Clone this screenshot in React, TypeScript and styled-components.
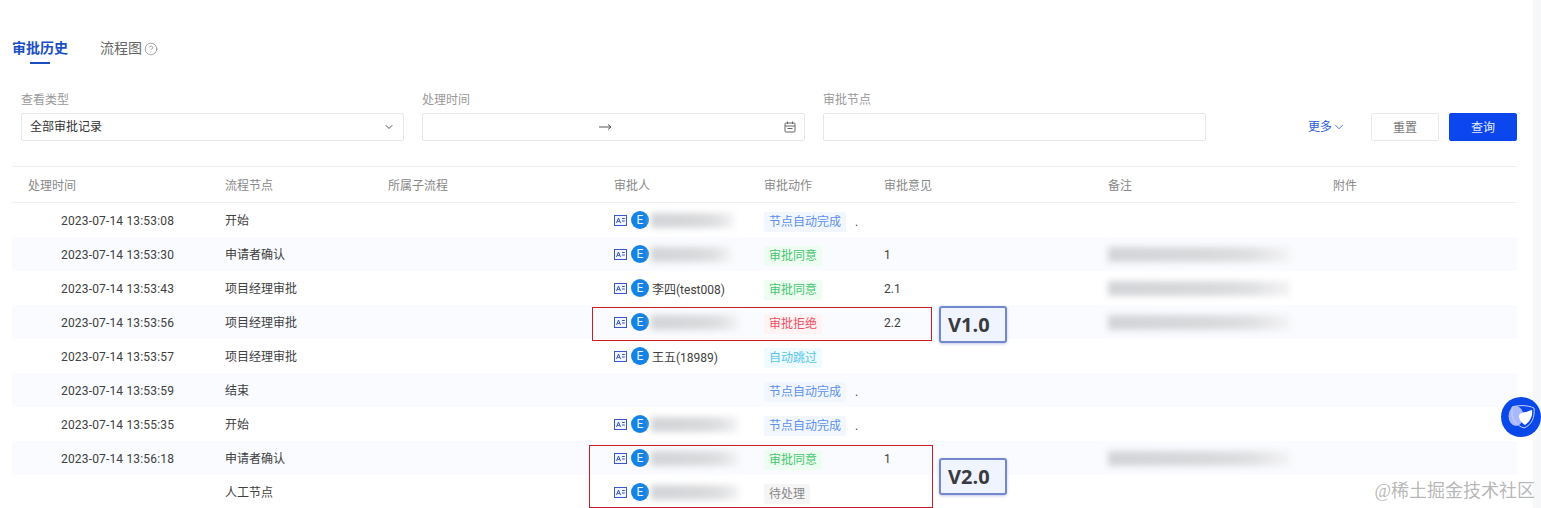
import React from "react";
import styled, { createGlobalStyle } from "styled-components";
import { ChevronDown, CircleHelp } from "lucide-react";

const Global = createGlobalStyle`
  html, body { margin: 0; padding: 0; height: 508px; overflow: hidden; background: #fff; }
  body { font-family: Roboto, "Noto Sans CJK SC", sans-serif; font-size: 12px; color: #333; }
`;

const Page = styled.div`
  position: relative;
  width: 1541px;
  height: 508px;
  overflow: hidden;
  display: flex;
`;
const Main = styled.main`
  width: 1533px;
  flex: none;
  padding: 38px 16px 0 12px;
  box-sizing: border-box;
`;
const ScrollTrack = styled.div`
  flex: 1;
  background: #f6f7f8;
`;
const Tabs = styled.div`
  display: flex;
  gap: 32px;
  height: 26px;
`;
const Tab = styled.div<{ $active?: boolean }>`
  position: relative;
  display: flex;
  align-items: center;
  gap: 2px;
  height: 20px;
  font-size: 14px;
  font-weight: ${(p) => (p.$active ? 600 : 400)};
  color: ${(p) => (p.$active ? "#1a4fc4" : "#666")};
  ${(p) =>
    p.$active &&
    `&::after { content: ""; position: absolute; left: 18px; bottom: -6px; width: 20px; height: 2px; background: #1a4fc4; }`}
`;
const TabLabel = styled.span`
  line-height: 20px;
  margin-top: -1px;
`;
const HelpIcon = styled(CircleHelp)`
  margin-top: 2px;
`;
const Filters = styled.div`
  display: flex;
  align-items: flex-end;
  margin-top: 27px;
  padding-left: 9px;
  height: 50px;
`;
const Field = styled.div`
  width: 383px;
  margin-right: 18px;
`;
const FieldLabel = styled.div`
  font-size: 12px;
  line-height: 18px;
  height: 22px;
  color: #999;
`;
const InputBox = styled.div`
  height: 28px;
  box-sizing: border-box;
  border: 1px solid #e4e6ea;
  border-radius: 2px;
  display: flex;
  align-items: center;
  justify-content: space-between;
  padding: 0 8px;
  font-size: 12px;
  color: #333;
`;
const InputText = styled.span`
  line-height: 18px;
  margin-top: -1px;
`;
const RangeArrow = styled.span`
  display: flex;
  margin-left: 168px;
`;
const Actions = styled.div`
  display: flex;
  align-items: center;
  margin-left: auto;
  height: 28px;
`;
const MoreLink = styled.div`
  display: flex;
  align-items: center;
  color: #2a5bdc;
  font-size: 12px;
  margin-right: 25px;
`;
const Button = styled.div<{ $primary?: boolean }>`
  width: 68px;
  height: 28px;
  box-sizing: border-box;
  display: flex;
  align-items: center;
  justify-content: center;
  padding-bottom: 2px;
  border-radius: 2px;
  font-size: 12px;
  margin-left: ${(p) => (p.$primary ? "10px" : "0")};
  background: ${(p) => (p.$primary ? "#0b46ee" : "#fff")};
  color: ${(p) => (p.$primary ? "#e8eefe" : "#777")};
  border: 1px solid ${(p) => (p.$primary ? "#0b46ee" : "#e6e8eb")};
`;
const Table = styled.div`
  margin-top: 25px;
`;
const COLS = "197px 163px 226px 150px 120px 224px 225px 200px";
const HeadRow = styled.div`
  display: grid;
  grid-template-columns: ${COLS};
  height: 37px;
  box-sizing: border-box;
  align-items: center;
  border-top: 1px solid #eeeff1;
  border-bottom: 1px solid #eeeff1;
  color: #888;
`;
const HeadCell = styled.div`
  padding: 0 0 1px 16px;
`;
const Row = styled.div<{ $alt: boolean }>`
  display: grid;
  grid-template-columns: ${COLS};
  height: 34px;
  align-items: center;
  background: ${(p) => (p.$alt ? "#f9fbfe" : "#fff")};
  color: #404040;
`;
const Cell = styled.div`
  padding-left: 16px;
  display: flex;
  align-items: center;
  min-width: 0;
`;
const TimeCell = styled(Cell)`
  padding: 2px 0 0 49px;
  letter-spacing: 0.17px;
`;
const NodeCell = styled(Cell)`
  padding-bottom: 2px;
`;
const OpinionCell = styled(Cell)`
  padding-top: 2px;
`;
const TagCell = styled(Cell)`
  padding-top: 4px;
`;
const Avatar = styled.span`
  width: 18px;
  height: 18px;
  border-radius: 50%;
  background: #1583e3;
  color: #eaf5ff;
  font-size: 12px;
  display: flex;
  align-items: center;
  justify-content: center;
  margin: 0 3px 0 4px;
  flex: none;
`;
const Blurred = styled.div<{ $w: number }>`
  width: ${(p) => p.$w}px;
  height: 15px;
  background: linear-gradient(90deg, #d2d4d7, #d8d9db 55%, #dfe0e2 78%, #f4f4f5);
  filter: blur(3px);
`;
const NameBlur = styled(Blurred)`
  margin-left: -1px;
`;
const Tag = styled.span<{ $c: string; $b: string }>`
  display: inline-block;
  height: 20px;
  line-height: 20px;
  padding: 0 5px;
  border-radius: 2px;
  font-size: 12px;
  color: ${(p) => p.$c};
  background: ${(p) => p.$b};
`;
const Dot = styled.span`
  margin-left: 9px;
  color: #444;
`;
const Highlight = styled.div<{ $x: number; $y: number; $w: number; $h: number }>`
  position: absolute;
  left: ${(p) => p.$x}px;
  top: ${(p) => p.$y}px;
  width: ${(p) => p.$w}px;
  height: ${(p) => p.$h}px;
  box-sizing: border-box;
  border: 1px solid #c81e28;
  pointer-events: none;
`;
const Version = styled.div<{ $y: number }>`
  position: absolute;
  left: 939px;
  top: ${(p) => p.$y}px;
  width: 68px;
  height: 37px;
  box-sizing: border-box;
  border: 2px solid #7388cf;
  border-radius: 3px;
  background: #eff4ff;
  box-shadow: 0 1px 3px rgba(80, 100, 180, 0.35);
  font-family: "Open Sans", "Liberation Sans", sans-serif;
  font-size: 20px;
  font-weight: 700;
  color: #3a3a40;
  display: flex;
  align-items: center;
  padding-left: 7px;
`;
const Float = styled.div`
  position: absolute;
  left: 1501px;
  top: 397px;
  width: 40px;
  height: 40px;
  border-radius: 50%;
  background: #0a48ea;
  display: flex;
  align-items: center;
  justify-content: center;
`;
const Watermark = styled.div`
  position: absolute;
  right: 6px;
  top: 479px;
  font-family: "Liberation Serif", "Noto Sans CJK SC", serif;
  font-size: 18px;
  line-height: 24px;
  color: rgba(120, 120, 120, 0.55);
  white-space: nowrap;
`;

const CardIcon = () => (
  <svg width="13" height="11" viewBox="0 0 13 11" fill="none" stroke="#3a58c8" strokeWidth="1" style={{ flex: "none" }}>
    <rect x="0.5" y="0.5" width="12" height="10" fill="#f3f6ff" />
    <path d="M2.5 8 L4.5 3 L6.5 8 M3.3 6.4 H5.7" />
    <path d="M8 3.5 H10.8 M8 6 H10.8" />
  </svg>
);
const ArrowIcon = () => (
  <svg width="13" height="8" viewBox="0 0 13 8" fill="none" stroke="#555" strokeWidth="1">
    <path d="M0 4 H12 M9 1.5 L12 4 L9 6.5" />
  </svg>
);
const CalendarIcon = () => (
  <svg width="12" height="12" viewBox="0 0 12 12" fill="none" stroke="#666" strokeWidth="1">
    <rect x="1" y="2" width="10" height="9" rx="1" />
    <path d="M1 5 H11 M3.5 .5 V3 M8.5 .5 V3 M3.5 7.5 H8.5" />
  </svg>
);
const FloatLogo = () => (
  <svg width="32" height="30" viewBox="0 0 32 30" style={{ marginLeft: 2 }}>
    <ellipse cx="10" cy="14" rx="7.5" ry="10" fill="#a9b8fb" />
    <path d="M6 5 C12 3 22 3 28 6 C29 15 26 23 18 26 C12 24 8 20 6 14 Z" fill="none" stroke="#c5d2ff" strokeWidth="1" />
    <path d="M13 14 C13 11 18 10 20 10 C22 9.5 25 8 26 8 C27 14 24 20 19 23 C16 21 13 18 13 14 Z" fill="#fff" />
  </svg>
);

const TAGS = {
  auto: { t: "节点自动完成", c: "#5b90ec", b: "#f2f7ff", dot: true },
  ok: { t: "审批同意", c: "#43c76e", b: "#effcf2" },
  no: { t: "审批拒绝", c: "#ee4f62", b: "#fff3f4" },
  skip: { t: "自动跳过", c: "#55c6ea", b: "#effbff" },
  wait: { t: "待处理", c: "#888", b: "#f5f5f6" },
};

type R = {
  time: string;
  node: string;
  who?: string;
  blur?: number;
  tag: keyof typeof TAGS;
  op?: string;
  remark?: boolean;
};
const rows: R[] = [
  { time: "2023-07-14 13:53:08", node: "开始", blur: 83, tag: "auto" },
  { time: "2023-07-14 13:53:30", node: "申请者确认", blur: 80, tag: "ok", op: "1", remark: true },
  { time: "2023-07-14 13:53:43", node: "项目经理审批", who: "李四(test008)", tag: "ok", op: "2.1", remark: true },
  { time: "2023-07-14 13:53:56", node: "项目经理审批", blur: 88, tag: "no", op: "2.2", remark: true },
  { time: "2023-07-14 13:53:57", node: "项目经理审批", who: "王五(18989)", tag: "skip" },
  { time: "2023-07-14 13:53:59", node: "结束", tag: "auto" },
  { time: "2023-07-14 13:55:35", node: "开始", blur: 87, tag: "auto" },
  { time: "2023-07-14 13:56:18", node: "申请者确认", blur: 88, tag: "ok", op: "1", remark: true },
  { time: "", node: "人工节点", blur: 88, tag: "wait" },
];
const heads = ["处理时间", "流程节点", "所属子流程", "审批人", "审批动作", "审批意见", "备注", "附件"];

export default function App() {
  return (
    <Page>
      <Global />
      <Main>
        <Tabs>
          <Tab $active>
            <TabLabel>审批历史</TabLabel>
          </Tab>
          <Tab>
            <TabLabel>流程图</TabLabel>
            <HelpIcon size={14} strokeWidth={1.1} color="#777" />
          </Tab>
        </Tabs>
        <Filters>
          <Field>
            <FieldLabel>查看类型</FieldLabel>
            <InputBox>
              <InputText>全部审批记录</InputText>
              <ChevronDown size={12} color="#555" />
            </InputBox>
          </Field>
          <Field>
            <FieldLabel>处理时间</FieldLabel>
            <InputBox>
              <RangeArrow>
                <ArrowIcon />
              </RangeArrow>
              <CalendarIcon />
            </InputBox>
          </Field>
          <Field>
            <FieldLabel>审批节点</FieldLabel>
            <InputBox />
          </Field>
          <Actions>
            <MoreLink>
              <InputText>更多</InputText>
              <ChevronDown size={14} strokeWidth={1.4} color="#2a5bdc" />
            </MoreLink>
            <Button>重置</Button>
            <Button $primary>查询</Button>
          </Actions>
        </Filters>
        <Table>
          <HeadRow>
            {heads.map((h) => (
              <HeadCell key={h}>{h}</HeadCell>
            ))}
          </HeadRow>
          {rows.map((r, i) => {
            const tag = TAGS[r.tag] as { t: string; c: string; b: string; dot?: boolean };
            return (
              <Row key={i} $alt={i % 2 === 1}>
                <TimeCell>{r.time}</TimeCell>
                <NodeCell>{r.node}</NodeCell>
                <Cell />
                <Cell>
                  {(r.who || r.blur) && (
                    <>
                      <CardIcon />
                      <Avatar>E</Avatar>
                      {r.who ?? <NameBlur $w={r.blur!} />}
                    </>
                  )}
                </Cell>
                <TagCell>
                  <Tag $c={tag.c} $b={tag.b}>
                    {tag.t}
                  </Tag>
                  {tag.dot && <Dot>.</Dot>}
                </TagCell>
                <OpinionCell>{r.op}</OpinionCell>
                <Cell>{r.remark && <Blurred $w={182} />}</Cell>
                <Cell />
              </Row>
            );
          })}
        </Table>
      </Main>
      <ScrollTrack />
      <Highlight $x={592} $y={307} $w={340} $h={34} />
      <Highlight $x={589} $y={445} $w={344} $h={63} />
      <Version $y={306}>V1.0</Version>
      <Version $y={458}>V2.0</Version>
      <Float>
        <FloatLogo />
      </Float>
      <Watermark>@稀土掘金技术社区</Watermark>
    </Page>
  );
}
